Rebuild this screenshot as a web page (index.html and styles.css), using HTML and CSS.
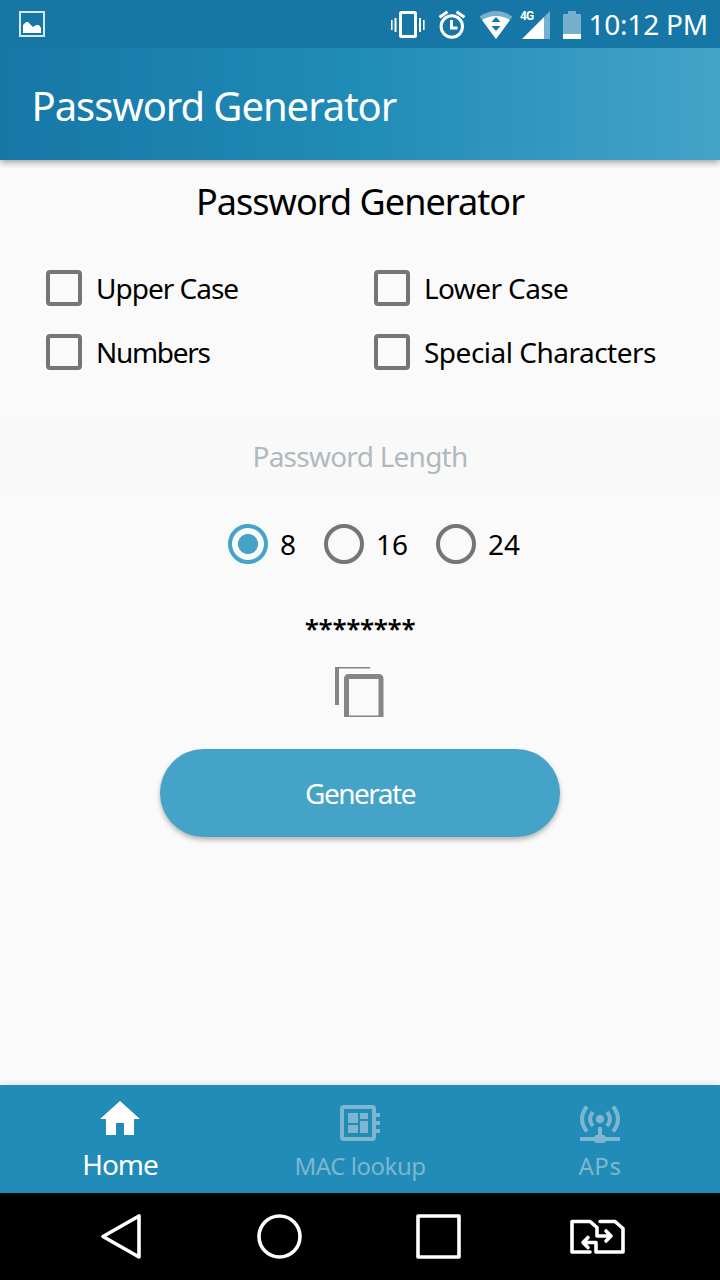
FILE: index.html
```html
<!DOCTYPE html>
<html lang="en">
<head>
<meta charset="utf-8">
<title>Password Generator</title>
<link rel="stylesheet" href="styles.css">
</head>
<body>
<div class="screen">
  <div class="status">
    <svg class="picture" width="26" height="26" viewBox="0 0 26 26"><rect x="1" y="1" width="24" height="24" fill="none" stroke="#d5e8f1" stroke-width="2"/><path d="M4 22v-8l3-3h2l5 5 3-2h3l2 3v5z" fill="#fff"/></svg>
    <svg class="indicators" width="192" height="30" viewBox="0 0 192 30" fill="#fff">
      <rect x="10.500" y="3.500" width="15" height="24" rx="1" fill="none" stroke="#fff" stroke-width="3"/>
      <path d="M1 11h1.600v10H1zM4.500 9h2v14h-2zM29 9h2v14h-2zM33 11h1.600v10H33z"/>
      <circle cx="61.800" cy="17.500" r="10.700" fill="none" stroke="#fff" stroke-width="3"/>
      <path d="M61.500 11v8h6M49.500 8.200l8-5.400M74.500 8.200l-8-5.400" fill="none" stroke="#fff" stroke-width="3"/>
      <path d="M89.500 7.500Q106-3.500 122.500 7.500L106 30z" opacity=".42"/>
      <path d="M92 11Q106 3 120 11L106 30z"/>
      <path d="M101.500 13l4.500-5 4.500 5zM101.500 17l4.500 5 4.500-5z" fill="#1677a7"/>
      <path d="M154 8l6-6v28h-6z" opacity=".42"/><path d="M132 30l22-22v22z"/>
      <path d="M173 5h5V2h8v3h5v20h-18z" opacity=".42"/><path d="M173 25h18v5h-18z"/>
    </svg>
    <span class="network">4G</span>
    <span class="clock">10:12 PM</span>
  </div>
  <header class="appbar"><span>Password Generator</span></header>
  <main class="content">
    <h1 class="heading"><span>Password Generator</span></h1>
    <div class="options">
      <div class="option"><i class="box"></i><span class="upper">Upper Case</span></div>
      <div class="option"><i class="box"></i><span class="lower">Lower Case</span></div>
      <div class="option"><i class="box"></i><span class="numbers">Numbers</span></div>
      <div class="option"><i class="box"></i><span class="special">Special Characters</span></div>
    </div>
    <div class="length"><span>Password Length</span></div>
    <div class="radios">
      <div class="radio first"><i class="ring on"></i><span>8</span></div>
      <div class="radio second"><i class="ring"></i><span>16</span></div>
      <div class="radio"><i class="ring"></i><span>24</span></div>
    </div>
    <div class="password"><span>********</span></div>
    <svg class="copy" width="50" height="50" viewBox="0 0 50 50" fill="none" stroke="#858585"><path d="M2 0v38" stroke-width="4"/><path d="M0 .8h35" stroke-width="1.600"/><path d="M11.500 50V12q0-2.500 2.500-2.500h29.500Q46 9.500 46 12v38" stroke-width="5"/><path d="M9.500 49.300h38.500" stroke-width="1.400"/></svg>
    <div class="generate"><span>Generate</span></div>
  </main>
  <nav class="tabs">
    <div class="tab active">
      <svg width="40" height="34" viewBox="0 0 40 34"><path fill="#fff" d="M20 0l20 18h-6v16H24V22h-8v12H6V18H0z"/></svg>
      <span>Home</span>
    </div>
    <div class="tab">
      <svg width="40" height="36" viewBox="0 0 40 36" fill="#7eb6d0"><path fill-rule="evenodd" d="M4 0h28q4 0 4 4v4h4v4h-4v4h4v4h-4v4h4v4h-4v4q0 4-4 4H4q-4 0-4-4V4q0-4 4-4zm0 4v28h28V4z"/><path d="M8 8h10v10H8zM20 8h8v6h-8zM8 20h10v8H8zM20 16h8v12h-8z"/></svg>
      <span class="mac">MAC lookup</span>
    </div>
    <div class="tab">
      <svg width="40" height="38" viewBox="0 0 40 38" fill="none" stroke="#7eb6d0" stroke-width="4"><circle cx="20" cy="14" r="4.300" fill="#7eb6d0" stroke="none"/><path d="M13 7q-6 7 0 14M27 7q6 7 0 14M7 1.500Q-3 14 7 26.500M33 1.500Q43 14 33 26.500M20 22v9M0 34h40"/><path d="M16 30h8l2 2v4l-2 2h-8l-2-2v-4z" fill="#7eb6d0" stroke="none"/></svg>
      <span class="aps">APs</span>
    </div>
  </nav>
  <div class="system">
    <svg width="720" height="87" viewBox="0 0 720 87" fill="none" stroke="#fff" stroke-width="3.600" stroke-linejoin="round"><path d="M139 23v41L103 43.500z"/><circle cx="279.500" cy="43.500" r="20.500"/><path d="M418 23h41v41h-41z"/><path d="M590 59h-18V28.500h18l7 6v8.500h14M606 38l5 5-5 5M600 28.500h15l8 7V59h-27V49.500h-12M588 44.500l-5 5 5 5" stroke-linecap="round"/></svg>
  </div>
</div>
</body>
</html>
```

FILE: styles.css
```css
* { box-sizing: border-box; }
body { margin: 0; font-family: "Noto Sans", sans-serif; font-size: 28px; color: #000; }
span { white-space: nowrap; }
.screen { width: 720px; height: 1280px; display: flex; flex-direction: column; background: #fafafa; overflow: hidden; }
.status { position: relative; z-index: 1; height: 48px; flex: none; display: flex; align-items: center; background: #1677a7; color: #fff; padding: 0 12px 0 19px; }
.picture { flex: none; }
.indicators { margin-left: 345px; flex: none; }
.network { position: absolute; left: 520px; top: 9px; font: bold 12px/14px "Roboto", sans-serif; letter-spacing: -0.9px; }
.clock { margin-left: auto; line-height: 48px; letter-spacing: -0.2px; }
.appbar { height: 112px; flex: none; display: flex; align-items: center; padding: 2px 0 0 31.5px; color: #fff; background: linear-gradient(90deg, #1677a7, #208cb8 50%, #44a3c7); box-shadow: 0 2px 7px rgba(0,0,0,.4); font-size: 40px; letter-spacing: -1.05px; position: relative; }
.content { flex: 1; display: flex; flex-direction: column; align-items: center; }
.heading { margin: 16px 0 0; height: 50px; font-size: 36px; font-weight: 400; line-height: 51px; letter-spacing: -0.95px; }
.options { width: 100%; margin-top: 30px; padding-left: 46px; display: grid; grid-template-columns: 328px 1fr; grid-auto-rows: 64px; }
.option { display: flex; align-items: center; gap: 14px; }
.box { width: 36px; height: 36px; border: 4px solid #757575; border-radius: 4px; }
.upper { letter-spacing: -1px; }
.lower { letter-spacing: -0.6px; }
.numbers { letter-spacing: -1.3px; }
.special { letter-spacing: -0.5px; }
.length { width: 100%; height: 80px; margin-top: 32px; background: #f9f9f9; display: flex; align-items: center; justify-content: center; color: #b0babd; letter-spacing: -0.75px; }
.radios { height: 96px; width: 720px; display: flex; align-items: center; padding-left: 228px; }
.radio { display: flex; align-items: center; gap: 12px; }
.first { width: 96px; }
.second { width: 112px; }
.ring { width: 40px; height: 40px; border: 4px solid #757575; border-radius: 50%; }
.on { border-color: #44a3c7; background: radial-gradient(circle, #44a3c7 9.7px, transparent 10.3px); }
.password { height: 48px; margin-top: 12px; line-height: 48px; font-size: 26px; font-weight: 600; letter-spacing: -0.4px; }
.copy { margin-top: 15px; flex: none; }
.generate { width: 400px; height: 88px; margin-top: 32px; border-radius: 44px; background: #44a3c7; color: #fff; display: flex; align-items: center; justify-content: center; box-shadow: 0 3px 5px rgba(0,0,0,.28); letter-spacing: -1.5px; }
.tabs { height: 108px; flex: none; display: grid; grid-template-columns: 240px 240px 240px; background: #208cb7; color: #7eb6d0; box-shadow: 0 0 7px rgba(0,0,0,.15); font-size: 24px; }
.tab { display: flex; flex-direction: column; align-items: center; padding: 20px 0 5px; }
.tab span { margin-top: auto; height: 46px; line-height: 46px; }
.tab svg { flex: none; }
.mac { letter-spacing: -0.45px; }
.aps { letter-spacing: 0.6px; }
.active { color: #fff; font-size: 28px; padding: 16px 0 6px; letter-spacing: -1.1px; }
.active span { height: 48px; line-height: 48px; }
.system { height: 87px; flex: none; background: #000; }
.system svg { display: block; }
```
